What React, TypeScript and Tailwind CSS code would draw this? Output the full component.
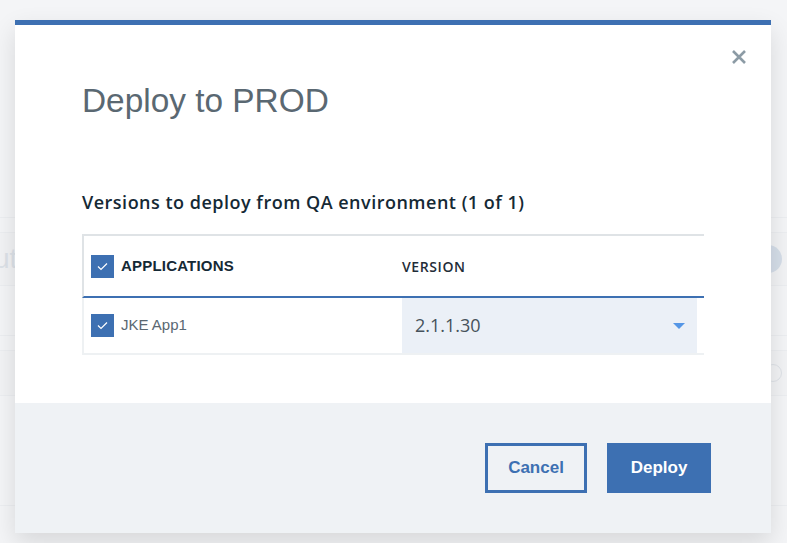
import React from 'react'

const plex = "font-['Open_Sans',sans-serif]"
const arial = "font-['Liberation_Sans',Arial,sans-serif]"

function Check() {
  return (
    <span className="flex h-[23px] w-[23px] shrink-0 items-center justify-center bg-[#3d70b2]">
      <svg width="11" height="9" viewBox="0 0 11 9" fill="none">
        <path d="M1 4.5L4 7.5L10 1.5" stroke="#ffffff" strokeWidth="1.2" />
      </svg>
    </span>
  )
}

function BackgroundPage() {
  // faint page content behind the modal overlay
  return (
    <div className="flex h-full w-full flex-col bg-[#f4f5f7]">
      <div className="h-[217px] shrink-0" />
      <div className="h-[15px] shrink-0 border-t border-[#eceef1]" />
      <div className="flex h-[53px] shrink-0 items-center justify-between border-t border-[#eceef1] bg-[#f2f3f5]">
        <span className={`${arial} -ml-[6px] text-[28px] text-[#dde2e8]`}>ut</span>
        <span className="mr-[5px] h-[28px] w-[28px] rounded-full bg-[#d5dee9]" />
      </div>
      <div className="h-[50px] shrink-0 border-t border-[#eceef1]" />
      <div className="h-[15px] shrink-0 border-t border-[#eceef1]" />
      <div className="flex h-[45px] shrink-0 items-center justify-end border-t border-[#eceef1] bg-[#f2f3f5]">
        <span className="mr-[5px] h-[18px] w-[18px] rounded-full border border-[#dfe3e8]" />
      </div>
      <div className="h-[110px] shrink-0 border-t border-[#eceef1]" />
      <div className="flex-1 border-t border-[#eceef1]" />
    </div>
  )
}

export default function App() {
  return (
    <div className="relative h-[543px] w-full overflow-hidden">
      <BackgroundPage />

      {/* Modal */}
      <div className="absolute left-[15px] top-[20px] flex w-[756px] flex-col border-t-[5px] border-[#3d70b2] bg-white shadow-[0_10px_24px_rgba(0,0,0,0.12)]">
        <button className="absolute right-[24px] top-[24px] text-[#8c9ba5]">
          <svg width="16" height="16" viewBox="0 0 16 16" fill="none">
            <path d="M2 2L14 14M14 2L2 14" stroke="currentColor" strokeWidth="2.6" />
          </svg>
        </button>

        <div className="flex h-[378px] flex-col px-[67px] pt-[56px]">
          <h1 className={`${arial} text-[33.4px] leading-[40px] text-[#5a6872]`}>Deploy to PROD</h1>

          <p className={`${plex} mt-[69px] text-[18px] font-semibold leading-[24px] tracking-[0.5px] text-[#152935]`}>
            Versions to deploy from QA environment (1 of 1)
          </p>

          <div className="mt-[20px] w-[622px]">
            <div className="flex h-[64px] border-b-2 border-l-2 border-t-2 border-b-[#3d70b2] border-l-[#dfe3e6] border-t-[#dfe3e6]">
              <div className="flex w-[318px] items-center gap-[7px] pl-[7px]">
                <Check />
                <span className={`${arial} text-[15px] font-bold tracking-[0.2px] text-[#152935]`}>APPLICATIONS</span>
              </div>
              <div className="flex flex-1 items-center">
                <span className={`${plex} text-[14px] font-semibold tracking-[0.6px] text-[#1f2d38]`}>VERSION</span>
              </div>
            </div>
            <div className="flex h-[57px] border-b-2 border-l-2 border-[#eef1f3]">
              <div className="flex w-[318px] items-center gap-[7px] pl-[7px]">
                <Check />
                <span className={`${arial} text-[15px] text-[#5a6872]`}>JKE App1</span>
              </div>
              <div className="flex flex-1 pr-[7px]">
                <div className="flex flex-1 items-center justify-between bg-[#ebf0f7] pl-[13px] pr-[12px]">
                  <span className={`${plex} text-[18px] text-[#46525c]`}>2.1.1.30</span>
                  <svg width="12" height="6" viewBox="0 0 12 6">
                    <path d="M0 0H12L6 6Z" fill="#5596e6" />
                  </svg>
                </div>
              </div>
            </div>
          </div>
        </div>

        <div className="flex h-[130px] items-center justify-end gap-[20px] bg-[#eff2f5] pr-[60px]">
          <button className={`${arial} h-[50px] w-[102px] border-[3px] border-[#3d70b2] text-[17px] font-bold text-[#3d70b2]`}>
            Cancel
          </button>
          <button className={`${arial} h-[50px] w-[104px] bg-[#3d70b2] text-[17px] font-bold text-white`}>
            Deploy
          </button>
        </div>
      </div>
    </div>
  )
}
